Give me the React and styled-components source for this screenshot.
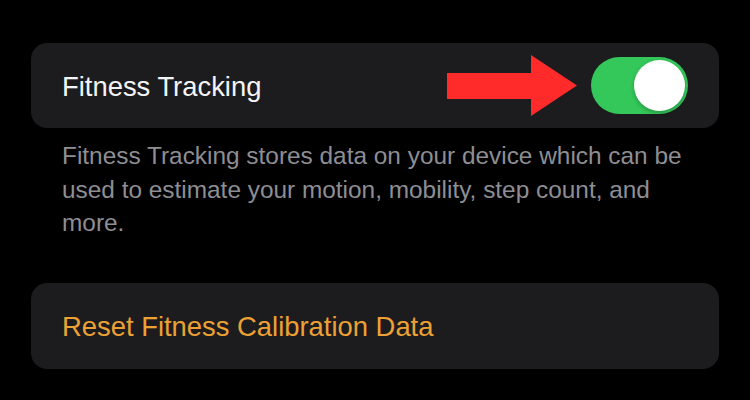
import React, { useState } from "react";
import styled, { createGlobalStyle } from "styled-components";

const GlobalStyle = createGlobalStyle`
  html, body {
    margin: 0;
    padding: 0;
    background: #000;
  }
  body {
    font-family: "Liberation Sans", Arial, sans-serif;
    -webkit-font-smoothing: antialiased;
  }
`;

const Page = styled.main`
  width: 750px;
  height: 400px;
  box-sizing: border-box;
  padding: 43px 31px 0;
  background: #000;
  overflow: hidden;
`;

const Card = styled.section`
  display: flex;
  align-items: center;
  justify-content: space-between;
  height: ${(p) => p.$height || 85}px;
  padding: 0 31px;
  box-sizing: border-box;
  background: #1c1c1e;
  border-radius: 16px;
`;

const Label = styled.span`
  font-size: 27.4px;
  padding-top: 3px;
  color: ${(p) => (p.$action ? "#eba134" : "#f4f4f6")};
`;

const RightGroup = styled.div`
  display: flex;
  align-items: center;
  gap: 13px;
`;

const Toggle = styled.button`
  position: relative;
  width: 97px;
  height: 57px;
  padding: 0;
  border: none;
  border-radius: 29px;
  background: ${(p) => (p.$on ? "#34c759" : "#39393d")};
  cursor: pointer;
`;

const Knob = styled.span`
  position: absolute;
  top: 3px;
  left: ${(p) => (p.$on ? "43px" : "3px")};
  width: 51px;
  height: 51px;
  border-radius: 50%;
  background: #fff;
  box-shadow: 0 2px 4px rgba(0, 0, 0, 0.25);
  transition: left 0.2s;
`;

const Description = styled.p`
  margin: 11px 0 0;
  padding: 0 0 0 31px;
  max-width: 635px;
  font-size: 24.4px;
  line-height: 33.5px;
  color: #8e8e93;
`;

const Spacer = styled.div`
  height: 43px;
`;

function Arrow() {
  return (
    <svg width="131" height="61" viewBox="0 0 131 61">
      <polygon
        points="0,18 84,18 84,0 130,30.5 84,61 84,44 0,44"
        fill="#ff2b2b"
      />
    </svg>
  );
}

export default function App() {
  const [on, setOn] = useState(true);

  return (
    <>
      <GlobalStyle />
      <Page>
        <Card>
          <Label>Fitness Tracking</Label>
          <RightGroup>
            <Arrow />
            <Toggle $on={on} onClick={() => setOn(!on)} aria-label="Fitness Tracking">
              <Knob $on={on} />
            </Toggle>
          </RightGroup>
        </Card>
        <Description>
          Fitness Tracking stores data on your device which can be used to
          estimate your motion, mobility, step count, and more.
        </Description>
        <Spacer />
        <Card $height={86}>
          <Label $action>Reset Fitness Calibration Data</Label>
        </Card>
      </Page>
    </>
  );
}
